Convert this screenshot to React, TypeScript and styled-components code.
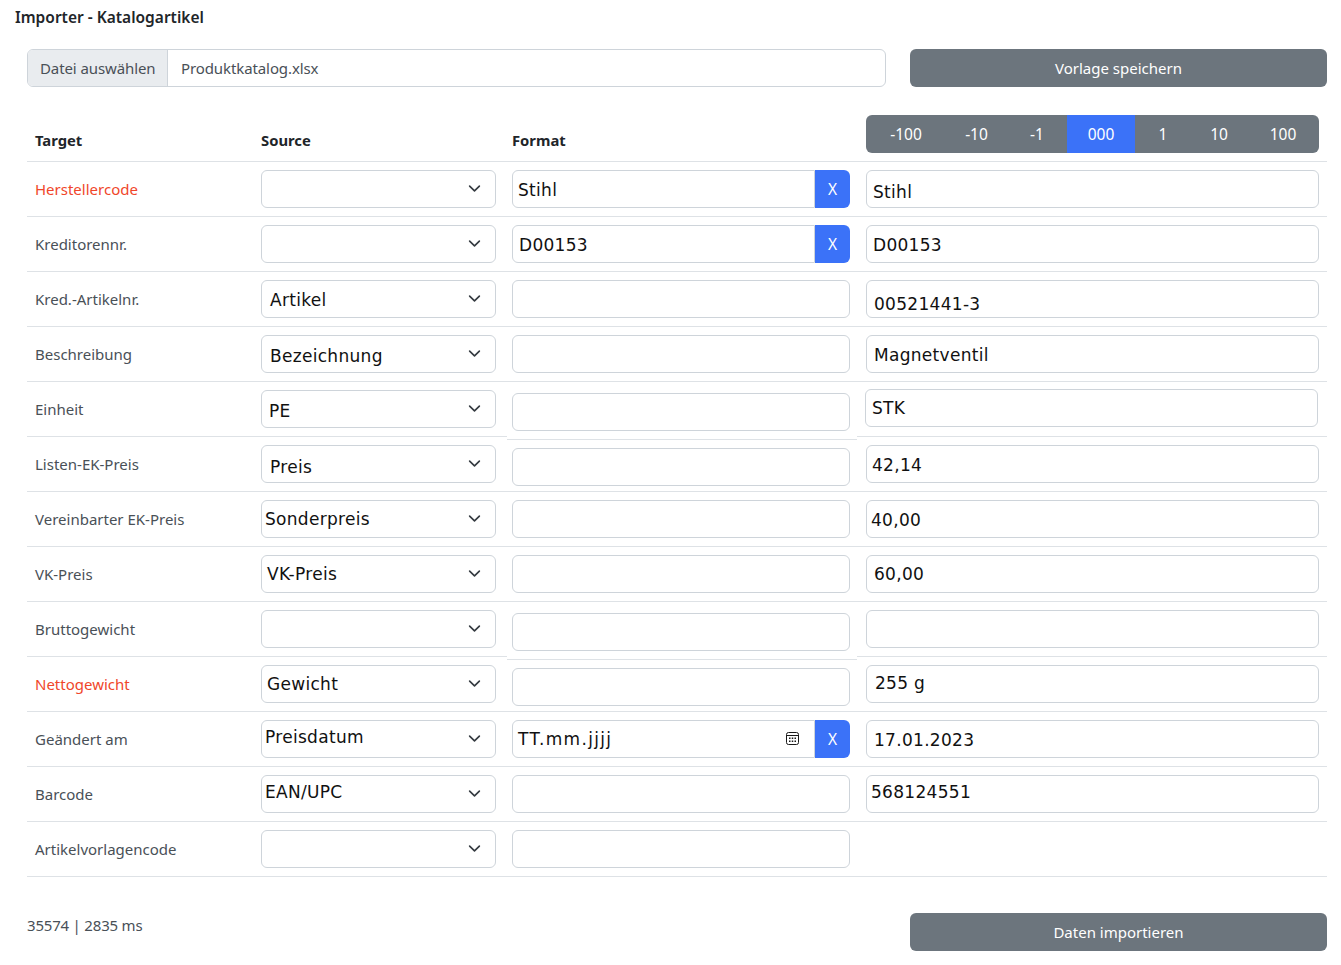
import styled, { createGlobalStyle } from 'styled-components'

const GlobalStyle = createGlobalStyle`
	* {
		box-sizing: border-box;
	}
	body {
		margin: 0;
		background: #fff;
		font-family: 'Noto Sans', 'Open Sans', sans-serif;
		font-size: 15px;
		color: #212529;
	}
`

type FieldValue = { text?: string; pad?: number; dy?: number }

type Row = {
	label: string
	required?: boolean
	source: FieldValue
	format: FieldValue
	clearable?: boolean
	date?: boolean
	drop?: 'first' | 'second'
	value?: FieldValue
	nudge?: boolean
}

const rows: Row[] = [
	{
		label: 'Herstellercode',
		required: true,
		source: {},
		format: { text: 'Stihl', pad: 4 },
		clearable: true,
		value: { text: 'Stihl', pad: 5, dy: 2 },
	},
	{
		label: 'Kreditorennr.',
		source: {},
		format: { text: 'D00153', pad: 5 },
		clearable: true,
		value: { text: 'D00153', pad: 5 },
	},
	{
		label: 'Kred.-Artikelnr.',
		source: { text: 'Artikel', pad: 7 },
		format: {},
		value: { text: '00521441-3', pad: 6, dy: 4 },
	},
	{
		label: 'Beschreibung',
		source: { text: 'Bezeichnung', pad: 7, dy: 1 },
		format: {},
		value: { text: 'Magnetventil', pad: 6 },
	},
	{
		label: 'Einheit',
		source: { text: 'PE', pad: 6, dy: 1 },
		format: {},
		drop: 'first',
		value: { text: 'STK', pad: 5, dy: -1 },
		nudge: true,
	},
	{
		label: 'Listen-EK-Preis',
		source: { text: 'Preis', pad: 7, dy: 2 },
		format: {},
		drop: 'second',
		value: { text: '42,14', pad: 4 },
	},
	{
		label: 'Vereinbarter EK-Preis',
		source: { text: 'Sonderpreis', pad: 2, dy: -1 },
		format: {},
		value: { text: '40,00', pad: 3 },
	},
	{
		label: 'VK-Preis',
		source: { text: 'VK-Preis', pad: 4, dy: -1 },
		format: {},
		value: { text: '60,00', pad: 6, dy: -1 },
	},
	{
		label: 'Bruttogewicht',
		source: {},
		format: {},
		drop: 'first',
		value: {},
	},
	{
		label: 'Nettogewicht',
		required: true,
		source: { text: 'Gewicht', pad: 4, dy: -1 },
		format: {},
		drop: 'second',
		value: { text: '255 g', pad: 7, dy: -2 },
	},
	{
		label: 'Geändert am',
		source: { text: 'Preisdatum', pad: 2, dy: -3 },
		format: { text: 'TT.mm.jjjj', pad: 4, dy: -1 },
		clearable: true,
		date: true,
		value: { text: '17.01.2023', pad: 6 },
	},
	{
		label: 'Barcode',
		source: { text: 'EAN/UPC', pad: 2, dy: -3 },
		format: {},
		value: { text: '568124551', pad: 3, dy: -3 },
	},
	{ label: 'Artikelvorlagencode', source: {}, format: {} },
]

const offsets = [
	{ label: '-100' },
	{ label: '-10' },
	{ label: '-1' },
	{ label: '000', active: true },
	{ label: '1' },
	{ label: '10' },
	{ label: '100' },
]

const Chevron = () => (
	<ChevronIcon viewBox="0 0 16 16" fill="none">
		<path
			d="M2 5l6 6 6-6"
			stroke="#343a40"
			strokeWidth="2"
			strokeLinecap="round"
			strokeLinejoin="round"
		/>
	</ChevronIcon>
)

const CalendarIcon = () => (
	<Calendar viewBox="0 0 15 15" fill="none">
		<rect x="1.5" y="1.5" width="12" height="12" rx="2" stroke="#1a1a1a" />
		<path d="M2 4.5h11" stroke="#1a1a1a" />
		<path
			d="M4 6.5h1.5V8H4zM6.75 6.5h1.5V8h-1.5zM9.5 6.5H11V8H9.5zM4 9.5h1.5V11H4zM6.75 9.5h1.5V11h-1.5zM9.5 9.5H11V11H9.5z"
			fill="#1a1a1a"
		/>
	</Calendar>
)

export default function App() {
	return (
		<Page>
			<GlobalStyle />
			<Title>Importer - Katalogartikel</Title>

			<TopBar>
				<FilePicker>
					<FileButton>Datei auswählen</FileButton>
					<FileName>Produktkatalog.xlsx</FileName>
				</FilePicker>
				<ActionButton type="button">Vorlage speichern</ActionButton>
			</TopBar>

			<Table>
				<HeaderRow>
					<HeaderCell>Target</HeaderCell>
					<HeaderCell>Source</HeaderCell>
					<HeaderCell $pad={5}>Format</HeaderCell>
					<OffsetCell>
						<OffsetGroup>
							{offsets.map(offset => (
								<OffsetButton
									key={offset.label}
									type="button"
									$active={offset.active}
								>
									{offset.label}
								</OffsetButton>
							))}
						</OffsetGroup>
					</OffsetCell>
				</HeaderRow>

				{rows.map(row => (
					<TableRow key={row.label}>
						<LabelCell $required={row.required}>{row.label}</LabelCell>

						<SourceCell>
							<Field $pad={row.source.pad} $dy={row.source.dy}>
								{row.source.text}
								<Chevron />
							</Field>
						</SourceCell>

						<FormatCell $drop={row.drop}>
							<Group>
								<Field
									$pad={row.format.pad}
									$dy={row.format.dy}
									$joined={row.clearable}
									$wide={row.date}
								>
									{row.format.text}
									{row.date && <CalendarIcon />}
								</Field>
								{row.clearable && <ClearButton type="button">X</ClearButton>}
							</Group>
						</FormatCell>

						<ValueCell $nudge={row.nudge}>
							{row.value && (
								<Field $pad={row.value.pad} $dy={row.value.dy}>
									{row.value.text}
								</Field>
							)}
						</ValueCell>
					</TableRow>
				))}
			</Table>

			<Footer>
				<Stats>35574 | 2835 ms</Stats>
				<ActionButton type="button">Daten importieren</ActionButton>
			</Footer>
		</Page>
	)
}

const Page = styled.div`
	padding: 6px 14px 14px 15px;
	width: 1341px;
`

const Title = styled.div`
	font-size: 15.5px;
	font-weight: 600;
	line-height: 22px;
	color: #212529;
`

const TopBar = styled.div`
	margin: 21px 0 28px 12px;
	display: grid;
	grid-template-columns: 859px 417px;
	column-gap: 24px;
`

const FilePicker = styled.div`
	height: 38px;
	display: flex;
	border: 1px solid #ced4da;
	border-radius: 6px;
	overflow: hidden;
	line-height: 36px;
	letter-spacing: -0.1px;
	color: #495057;
`

const FileButton = styled.div`
	width: 140px;
	padding-left: 12px;
	background: #e9ecef;
	border-right: 1px solid #ced4da;
`

const FileName = styled.div`
	padding-left: 13px;
`

const ActionButton = styled.button`
	height: 38px;
	border: none;
	border-radius: 6px;
	background: #6c757d;
	color: #fff;
	font-family: inherit;
	font-size: 15px;
`

const Table = styled.div`
	margin-left: 12px;
	width: 1300px;
`

const columns = '226px 254px 350px 470px'

const HeaderRow = styled.div`
	display: grid;
	grid-template-columns: ${columns};
	height: 47px;
	border-bottom: 1px solid #dee2e6;
`

const HeaderCell = styled.div<{ $pad?: number }>`
	padding: 17px 0 0 ${({ $pad }) => $pad ?? 8}px;
	font-size: 14.8px;
	font-weight: 700;
	line-height: 16px;
	color: #212529;
`

const OffsetCell = styled.div`
	padding-left: 9px;
`

const OffsetGroup = styled.div`
	width: 453px;
	height: 38px;
	display: grid;
	grid-template-columns: 80px 61px 60px 68px 56px 56px 72px;
	border-radius: 6px;
	overflow: hidden;
`

const OffsetButton = styled.button<{ $active?: boolean }>`
	border: none;
	padding: 0 0 1px 0;
	background: ${({ $active }) => ($active ? '#3b72f8' : '#6c757d')};
	color: #fff;
	font-family: inherit;
	font-size: 15.5px;
`

const TableRow = styled.div`
	display: grid;
	grid-template-columns: ${columns};
	height: 55px;
	align-items: start;
`

const Cell = styled.div`
	height: 55px;
	padding-top: 8px;
	border-bottom: 1px solid #dee2e6;
`

const LabelCell = styled(Cell)<{ $required?: boolean }>`
	padding-left: 8px;
	line-height: 38px;
	color: ${({ $required }) => ($required ? '#f0462a' : '#495057')};
`

const SourceCell = styled(Cell)`
	padding-left: 8px;
	padding-right: 11px;
`

const FormatCell = styled(Cell)<{ $drop?: 'first' | 'second' }>`
	padding-left: 5px;
	padding-right: 7px;
	padding-top: ${({ $drop }) => ($drop ? 11 : 8)}px;
	height: ${({ $drop }) => ($drop === 'first' ? 58 : 55)}px;
	margin-bottom: ${({ $drop }) => ($drop === 'first' ? -3 : 0)}px;
`

const ValueCell = styled(Cell)<{ $nudge?: boolean }>`
	padding-left: ${({ $nudge }) => ($nudge ? 8 : 9)}px;
	padding-right: ${({ $nudge }) => ($nudge ? 9 : 8)}px;
	padding-top: ${({ $nudge }) => ($nudge ? 7 : 8)}px;
`

const Group = styled.div`
	display: flex;
	height: 38px;
`

const Field = styled.div<{
	$pad?: number
	$dy?: number
	$joined?: boolean
	$wide?: boolean
}>`
	position: relative;
	flex: 1;
	height: 38px;
	display: flex;
	align-items: center;
	padding-left: ${({ $pad }) => ($pad ?? 6) + 1}px;
	padding-top: ${({ $dy }) => Math.max(($dy ?? 0) + 1, 0) * 2}px;
	padding-bottom: ${({ $dy }) => Math.max(-(($dy ?? 0) + 1), 0) * 2}px;
	border: 1px solid #ced4da;
	border-radius: ${({ $joined }) => ($joined ? '6px 0 0 6px' : '6px')};
	font-family: 'DejaVu Sans', Verdana, sans-serif;
	font-size: 17px;
	letter-spacing: ${({ $wide }) => ($wide ? 1.3 : 0.3)}px;
	color: #111;
	white-space: nowrap;
`

const ChevronIcon = styled.svg`
	position: absolute;
	top: 11px;
	right: 14px;
	width: 13px;
	height: 13px;
`

const Calendar = styled.svg`
	position: absolute;
	top: 10px;
	right: 14px;
	width: 15px;
	height: 15px;
`

const ClearButton = styled.button`
	width: 35px;
	height: 38px;
	padding: 0;
	border: none;
	border-radius: 0 6px 6px 0;
	background: #3b72f8;
	color: #fff;
	font-family: inherit;
	font-size: 15.5px;
`

const Footer = styled.div`
	margin: 36px 0 0 12px;
	display: grid;
	grid-template-columns: 859px 417px;
	column-gap: 24px;
`

const Stats = styled.div`
	padding-top: 1px;
	line-height: 22px;
	letter-spacing: -0.2px;
	color: #495057;
`
